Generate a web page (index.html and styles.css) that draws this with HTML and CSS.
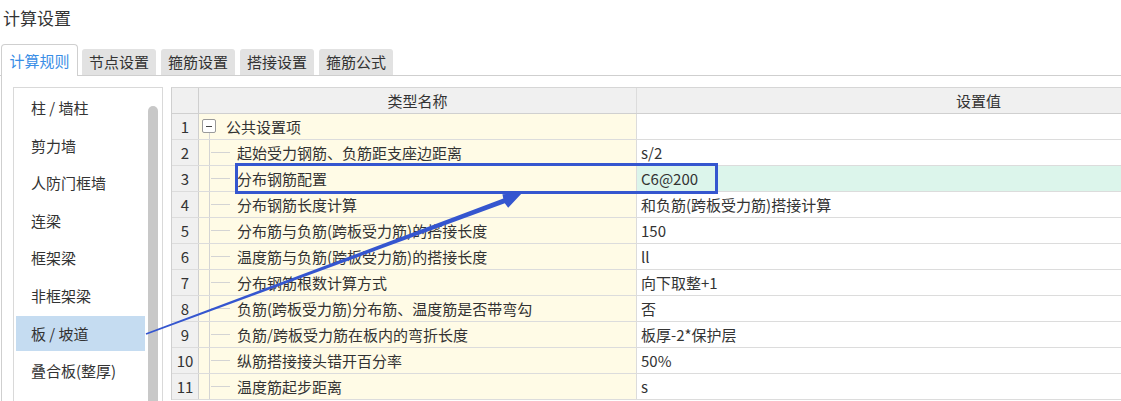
FILE: index.html
```html
<!DOCTYPE html>
<html lang="zh-CN">
<head>
  <meta charset="UTF-8">
  <title>计算设置</title>
  <link rel="stylesheet" href="styles.css">
</head>
<body>

<div class="title">计算设置</div>

<div class="tabs">
  <div class="tab active">计算规则</div>
  <div class="tab">节点设置</div>
  <div class="tab">箍筋设置</div>
  <div class="tab">搭接设置</div>
  <div class="tab">箍筋公式</div>
</div>

<div class="panel">
  <div class="sidebar">
    <ul class="side-list">
      <li>柱 / 墙柱</li>
      <li>剪力墙</li>
      <li>人防门框墙</li>
      <li>连梁</li>
      <li>框架梁</li>
      <li>非框架梁</li>
      <li class="selected">板 / 坡道</li>
      <li>叠合板(整厚)</li>
    </ul>
    <div class="scrollbar"></div>
  </div>

  <div class="grid-wrap">
    <div class="grid">
      <div class="row head">
        <div class="num"></div>
        <div class="name">类型名称</div>
        <div class="val">设置值</div>
      </div>
      <div class="row">
        <div class="num">1</div>
        <div class="name group"><span class="toggle"></span>公共设置项</div>
        <div class="val"></div>
      </div>
      <div class="row">
        <div class="num">2</div>
        <div class="name child">起始受力钢筋、负筋距支座边距离</div>
        <div class="val">s/2</div>
      </div>
      <div class="row">
        <div class="num">3</div>
        <div class="name child">分布钢筋配置</div>
        <div class="val picked">C6@200</div>
      </div>
      <div class="row">
        <div class="num">4</div>
        <div class="name child">分布钢筋长度计算</div>
        <div class="val">和负筋(跨板受力筋)搭接计算</div>
      </div>
      <div class="row">
        <div class="num">5</div>
        <div class="name child">分布筋与负筋(跨板受力筋)的搭接长度</div>
        <div class="val">150</div>
      </div>
      <div class="row">
        <div class="num">6</div>
        <div class="name child">温度筋与负筋(跨板受力筋)的搭接长度</div>
        <div class="val">ll</div>
      </div>
      <div class="row">
        <div class="num">7</div>
        <div class="name child">分布钢筋根数计算方式</div>
        <div class="val">向下取整+1</div>
      </div>
      <div class="row">
        <div class="num">8</div>
        <div class="name child">负筋(跨板受力筋)分布筋、温度筋是否带弯勾</div>
        <div class="val">否</div>
      </div>
      <div class="row">
        <div class="num">9</div>
        <div class="name child">负筋/跨板受力筋在板内的弯折长度</div>
        <div class="val">板厚-2*保护层</div>
      </div>
      <div class="row">
        <div class="num">10</div>
        <div class="name child">纵筋搭接接头错开百分率</div>
        <div class="val">50%</div>
      </div>
      <div class="row">
        <div class="num">11</div>
        <div class="name child">温度筋起步距离</div>
        <div class="val">s</div>
      </div>
    </div>
  </div>
</div>

<!-- annotation drawn over the screenshot -->
<div class="mark"></div>
<svg class="arrow" width="1121" height="401" viewBox="0 0 1121 401">
  <polygon fill="#3556cf" points="146.3,334.7 504.8,203.2 508.2,207.8 522,193 502.4,194.2 503.3,198.6 145.7,333.3"/>
</svg>

</body>
</html>
```

FILE: styles.css
```css
body {
  margin: 0;
  font-family: "Noto Sans CJK SC", "Microsoft YaHei", sans-serif;
  font-size: 15px;
  color: #333;
  background: #fff;
  overflow: hidden;
  height: 401px;
}

.title {
  height: 44px;
  box-sizing: border-box;
  padding: 6px 0 0 3px;
  font-size: 17px;
  line-height: 24px;
}

.tabs {
  display: flex;
  align-items: flex-end;
  height: 31px;
  padding-left: 1px;
  border-bottom: 1px solid #cfcfcf;
}
.tab {
  width: 74px;
  height: 26px;
  margin-left: 5px;
  line-height: 26px;
  text-align: center;
  background: #e2e2e2;
  border-radius: 3px 3px 0 0;
}
.tab.active {
  width: 75px;
  height: 31px;
  margin-left: 0;
  margin-bottom: -1px;
  line-height: 32px;
  background: #fff;
  color: #3a8ee6;
  border: 1px solid #cfcfcf;
  border-bottom: none;
  border-radius: 4px 4px 0 0;
}
.tab.active + .tab {
  margin-left: 4px;
}

.panel {
  display: flex;
  gap: 8px;
  height: 325px;
  margin-left: 1px;
  padding: 11px 0 0 11px;
  border-left: 1px solid #cfcfcf;
  overflow: hidden;
}

.sidebar {
  display: flex;
  width: 148px;
  height: 330px;
  flex-shrink: 0;
  border: 1px solid #d9d9d9;
}
.side-list {
  list-style: none;
  margin: 0;
  padding: 2px 0 0 2px;
  width: 129px;
}
.side-list li {
  height: 35px;
  margin-bottom: 2.6px;
  padding-left: 15px;
  line-height: 35px;
}
.side-list li.selected {
  background: #c5dcf1;
}
.scrollbar {
  width: 10px;
  margin: 18px 0 0 3px;
  background: #c8c8c8;
  border-radius: 5px 5px 0 0;
}

.grid-wrap {
  flex: 1;
  min-width: 0;
  overflow: hidden;
}
.grid {
  width: 1151px;
  border-left: 1px solid #cfcfcf;
  border-top: 1px solid #d6d6d6;
}
.row {
  display: grid;
  grid-template-columns: 27px 438px 684px;
  height: 26px;
  box-sizing: border-box;
  border-bottom: 1px solid #dcdcdc;
  line-height: 25px;
}
.row > div {
  border-right: 1px solid #dcdcdc;
  white-space: nowrap;
  overflow: hidden;
}
.num {
  background: #f0f0f0;
  text-align: center;
  border-right-color: #cfcfcf !important;
}
.name {
  position: relative;
  background: #fffbe6;
  padding-left: 38px;
}
.val {
  padding-left: 4px;
}
.val.picked {
  background: #dcf5eb;
}

.head {
  background: #f0f0f0;
  border-bottom-color: #d0d0d0;
}
.head .name,
.head .val {
  background: #f0f0f0;
  padding-left: 0;
  text-align: center;
}

.name.group {
  padding-left: 27px;
}
.toggle {
  position: absolute;
  left: 3px;
  top: 5px;
  width: 12px;
  height: 12px;
  border: 1px solid #9a9a9a;
  border-radius: 2px;
  background: #fff;
}
.toggle::after {
  content: "";
  position: absolute;
  left: 3px;
  top: 6px;
  width: 6px;
  height: 1px;
  background: #444;
}
.name.group::after {
  content: "";
  position: absolute;
  left: 10px;
  top: 19px;
  bottom: -1px;
  width: 1px;
  background: #d4d4d4;
}

.name.child::before {
  content: "";
  position: absolute;
  left: 10px;
  top: -1px;
  bottom: -1px;
  width: 1px;
  background: #d4d4d4;
}
.name.child::after {
  content: "";
  position: absolute;
  left: 12px;
  top: 12px;
  width: 19px;
  height: 1px;
  background: #d4d4d4;
}

.mark {
  position: absolute;
  left: 235px;
  top: 163px;
  width: 477px;
  height: 25px;
  border: 3px solid #3556cf;
}
.arrow {
  position: absolute;
  left: 0;
  top: 0;
  pointer-events: none;
}
```
